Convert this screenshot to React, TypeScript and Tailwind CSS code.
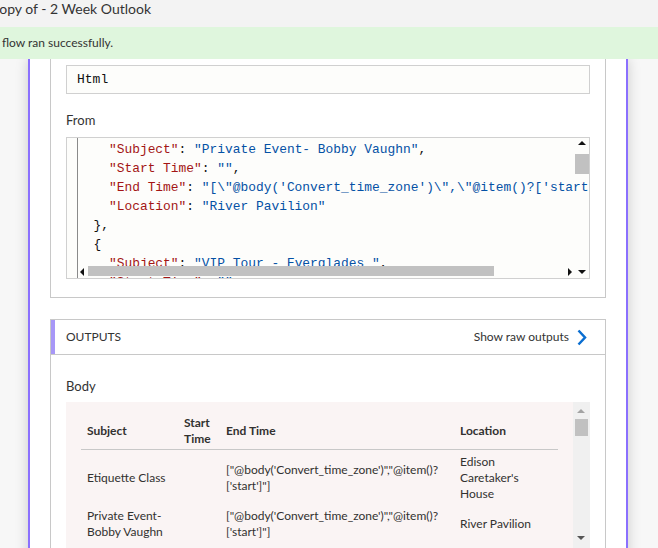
import React from "react";

const K = ({ children }: { children: React.ReactNode }) => <span className="text-[#a31515]">{children}</span>;
const S = ({ children }: { children: React.ReactNode }) => <span className="text-[#0451a5]">{children}</span>;

export default function App() {
  const sans = "font-['Lato','Open_Sans',sans-serif]";
  return (
    <div className={`w-[658px] h-[548px] overflow-hidden bg-[#f7f7f7] text-[#323130] ${sans}`}>
      <div className="h-[27px] bg-[#f3f3f3] flex items-start">
        <span className="ml-[-10px] text-[14px] leading-[18px] text-[#333]">Copy of - 2 Week Outlook</span>
      </div>
      <div className="h-[32px] bg-[#dff6dd] flex items-center relative z-10">
        <span className="ml-[2px] text-[12px] text-[#333]">flow ran successfully.</span>
      </div>
      <div className="ml-[28px] w-[600px] h-[600px] border-x-2 border-[#8b70fe] bg-white px-[20px] shadow-[0_0_12px_rgba(0,0,0,0.18)]">
        {/* Card 1 */}
        <div className="border-x border-b border-[#c8c8c8] px-[15px] pt-[6px] pb-[18px]">
          <div className="h-[29px] border border-[#d0d0d0] bg-[#fdfdfb] pl-[10px] flex items-center font-['Liberation_Mono',monospace] text-[13px] text-[#111]">
            Html
          </div>
          <div className="mt-[17px] mb-[8px] text-[13px] leading-[18px] text-[#333]">From</div>
          <div className="relative h-[142px] border border-[#d0d0d0] bg-[#fdfdfb] overflow-hidden">
            <div className="absolute left-0 top-0 bottom-0 w-[11px] border-r border-[#8a8a8a]" />
            <div className="absolute left-[11px] top-[2px] whitespace-pre font-['Liberation_Mono',monospace] text-[12.9px] leading-[19px] text-[#111]">
              <div>{"    "}<K>"Subject"</K>: <S>"Private Event- Bobby Vaughn"</S>,</div>
              <div>{"    "}<K>"Start Time"</K>: <S>""</S>,</div>
              <div>{"    "}<K>"End Time"</K>: <S>{`"[\\"@body('Convert_time_zone')\\",\\"@item()?['start']\\"]"`}</S></div>
              <div>{"    "}<K>"Location"</K>: <S>"River Pavilion"</S></div>
              <div>{"  "}{"},"}</div>
              <div>{"  "}{"{"}</div>
              <div>{"    "}<K>"Subject"</K>: <S>"VIP Tour - Everglades "</S>,</div>
              <div>{"    "}<K>"Start Time"</K>: <S>""</S>,</div>
            </div>
            {/* vertical scrollbar */}
            <div className="absolute right-0 top-0 bottom-0 w-[14px]">
              <div className="absolute left-[3px] top-[3px] w-0 h-0 border-l-[4px] border-r-[4px] border-b-[4px] border-l-transparent border-r-transparent border-b-[#111]" />
              <div className="absolute left-0 right-0 top-[16px] h-[20px] bg-[#c1c1c1]" />
              <div className="absolute left-[3px] bottom-[4px] w-0 h-0 border-l-[4px] border-r-[4px] border-t-[4px] border-l-transparent border-r-transparent border-t-[#111]" />
            </div>
            {/* horizontal scrollbar */}
            <div className="absolute left-[12px] right-[14px] bottom-[1px] h-[11px]">
              <div className="absolute left-[1px] top-[2px] w-0 h-0 border-t-[4px] border-b-[4px] border-r-[4px] border-t-transparent border-b-transparent border-r-[#111]" />
              <div className="absolute left-[9px] top-0 h-[10px] w-[406px] bg-[#c1c1c1]" />
              <div className="absolute right-[3px] top-[2px] w-0 h-0 border-t-[4px] border-b-[4px] border-l-[4px] border-t-transparent border-b-transparent border-l-[#111]" />
            </div>
          </div>
        </div>

        {/* Card 2 */}
        <div className="mt-[21px] border border-[#c8c8c8]">
          <div className="relative h-[35px] border-b border-[#c8c8c8] pl-[15px] pr-[17px] flex items-center justify-between">
            <div className="absolute left-0 top-0 bottom-0 w-[4px] bg-[#a797f7]" />
            <span className="text-[12px] text-[#333]">OUTPUTS</span>
            <div className="flex items-center gap-[7px]">
              <span className="text-[12px] text-[#333]">Show raw outputs</span>
              <svg width="12" height="17" viewBox="0 0 12 17">
                <path d="M2.5 1.5 L9 8.5 L2.5 15.5" fill="none" stroke="#0a6ed1" strokeWidth="2.5" />
              </svg>
            </div>
          </div>
          <div className="px-[15px] pt-[22px]">
            <div className="mb-[7px] text-[13px] leading-[18px] text-[#333]">Body</div>
            <div className="relative h-[160px] bg-[#faf4f4]">
              <div className="absolute right-0 top-0 bottom-0 w-[17px] bg-[#f0f0f0]">
                <div className="absolute left-[4px] top-[7px] w-0 h-0 border-l-[4px] border-r-[4px] border-b-[4px] border-l-transparent border-r-transparent border-b-[#a3a3a3]" />
                <div className="absolute left-[2px] right-[2px] top-[17px] h-[17px] bg-[#c1c1c1]" />
                <div className="absolute left-[4px] top-[134px] w-0 h-0 border-l-[4px] border-r-[4px] border-t-[4px] border-l-transparent border-r-transparent border-t-[#555]" />
              </div>
              <div className="ml-[15px] w-[477px] pt-[13px] text-[12px] leading-[16px]">
                <div className="grid grid-cols-[97px_42px_234px_104px] items-center font-bold border-b border-[#c8c8c8] pb-[2px]">
                  <div className="px-[6px]">Subject</div>
                  <div className="px-[6px]">Start<br />Time</div>
                  <div className="px-[6px]">End Time</div>
                  <div className="px-[6px]">Location</div>
                </div>
                <div className="grid grid-cols-[97px_42px_234px_104px] items-center pt-[4px] pb-[3px]">
                  <div className="px-[6px]">Etiquette Class</div>
                  <div className="px-[6px]"></div>
                  <div className="px-[6px]">{`["@body('Convert_time_zone')","@item()?`}<br />{`['start']"]`}</div>
                  <div className="px-[6px]">Edison<br />Caretaker's<br />House</div>
                </div>
                <div className="grid grid-cols-[97px_42px_234px_104px] items-center pt-[3px]">
                  <div className="px-[6px]">Private Event-<br />Bobby Vaughn</div>
                  <div className="px-[6px]"></div>
                  <div className="px-[6px]">{`["@body('Convert_time_zone')","@item()?`}<br />{`['start']"]`}</div>
                  <div className="px-[6px]">River Pavilion</div>
                </div>
              </div>
            </div>
          </div>
        </div>
      </div>
    </div>
  );
}
